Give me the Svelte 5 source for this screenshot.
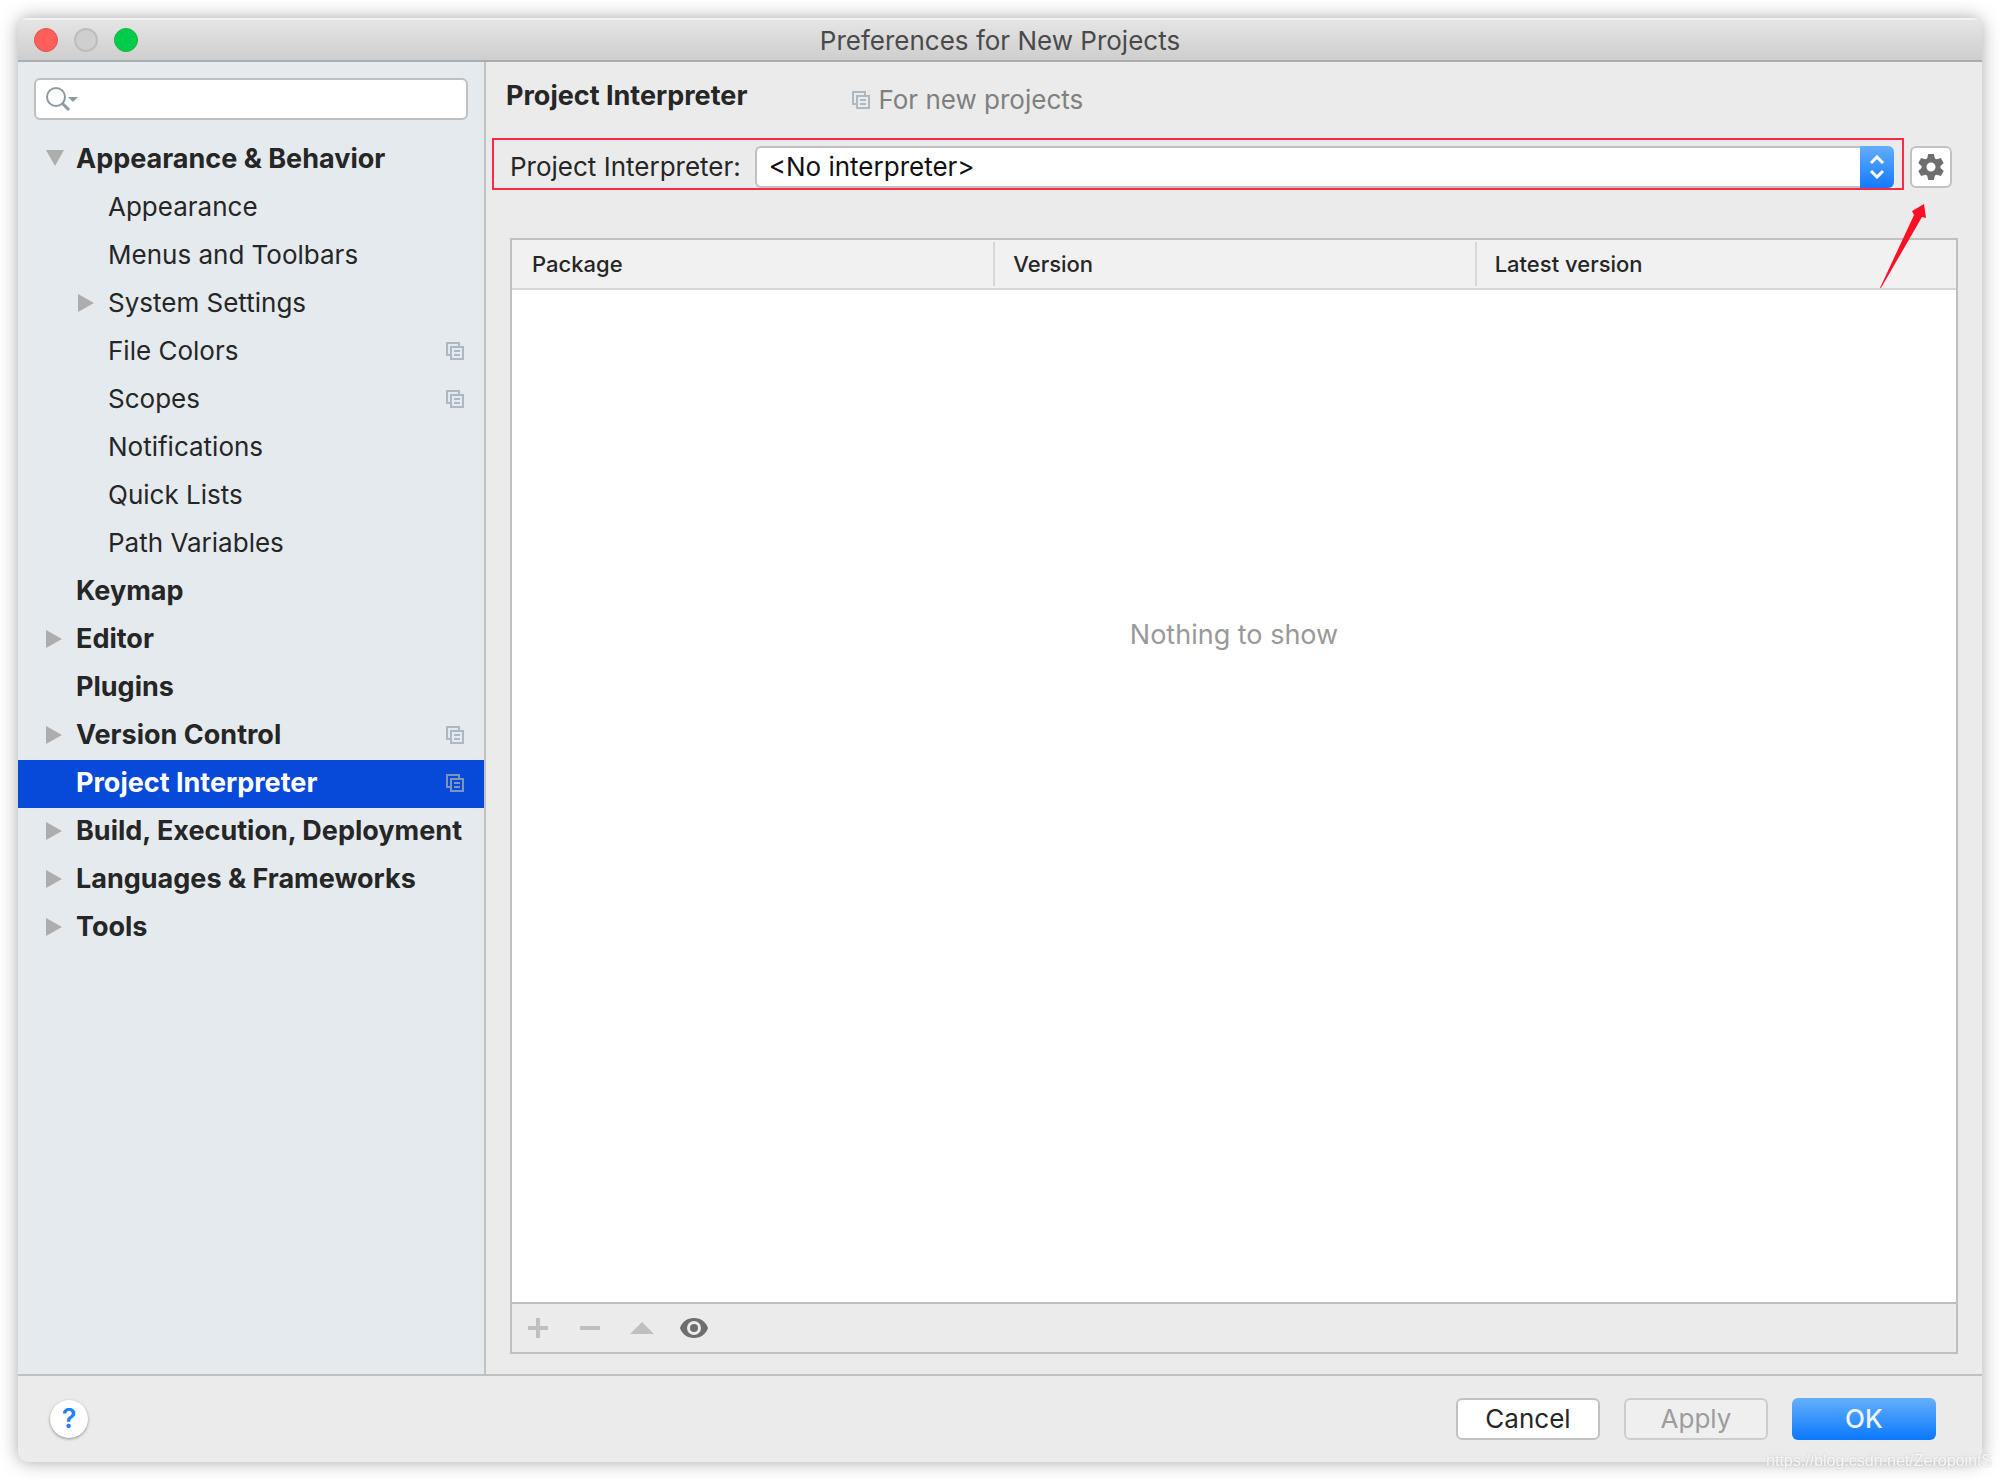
<script>
	let query = $state('')
	let interpreter = $state('none')

	const tree = [
		{ label: 'Appearance & Behavior', arrow: 'open' },
		{ label: 'Appearance', child: true },
		{ label: 'Menus and Toolbars', child: true },
		{ label: 'System Settings', child: true, arrow: 'closed' },
		{ label: 'File Colors', child: true, shared: true },
		{ label: 'Scopes', child: true, shared: true },
		{ label: 'Notifications', child: true },
		{ label: 'Quick Lists', child: true },
		{ label: 'Path Variables', child: true },
		{ label: 'Keymap' },
		{ label: 'Editor', arrow: 'closed' },
		{ label: 'Plugins' },
		{ label: 'Version Control', arrow: 'closed', shared: true },
		{ label: 'Project Interpreter', shared: true },
		{ label: 'Build, Execution, Deployment', arrow: 'closed' },
		{ label: 'Languages & Frameworks', arrow: 'closed' },
		{ label: 'Tools', arrow: 'closed' }
	]
	let selected = $state('Project Interpreter')

	const columns = ['Package', 'Version', 'Latest version']
</script>

{#snippet copyIcon()}
	<svg class="copy" width="18" height="18" viewBox="0 0 18 18" aria-hidden="true">
		<path d="M4 13H1V1h12v3M5 5h12v12H5zM8 9h6M8 13h6" />
	</svg>
{/snippet}

<div class="desktop">
	<div class="window">
		<header class="titlebar">
			<div class="lights">
				<button class="light close" aria-label="Close"></button>
				<button class="light minimize" aria-label="Minimize" disabled></button>
				<button class="light zoom" aria-label="Zoom"></button>
			</div>
			<h1>Preferences for New Projects</h1>
		</header>

		<div class="body">
			<nav class="sidebar">
				<label class="search">
					<svg width="34" height="26" viewBox="0 0 34 26" aria-hidden="true">
						<circle cx="10" cy="11" r="9" />
						<path d="M16 17l7 7" stroke-width="3" />
						<path class="caret" d="M22 11h10l-5 5z" />
					</svg>
					<input type="text" aria-label="Search settings" bind:value={query} />
				</label>
				<ul>
					{#each tree as item}
						<li>
							<button
								class="row"
								class:child={item.child}
								class:selected={item.label === selected}
								onclick={() => (selected = item.label)}>
								<span class="arrow">
									{#if item.arrow === 'open'}
										<svg width="18" height="18" viewBox="0 0 18 18"><path d="M0 0h18L9 16z" /></svg>
									{:else if item.arrow === 'closed'}
										<svg width="18" height="18" viewBox="0 0 18 18"><path d="M0 0v18l16-9z" /></svg>
									{/if}
								</span>
								<span class="label">{item.label}</span>
								{#if item.shared}{@render copyIcon()}{/if}
							</button>
						</li>
					{/each}
				</ul>
			</nav>

			<main>
				<div class="heading">
					<h2>Project Interpreter</h2>
					<p class="scope">{@render copyIcon()}For new projects</p>
				</div>

				<div class="picker">
					<div class="marked">
						<label for="interpreter">Project Interpreter:</label>
						<div class="combo">
							<select id="interpreter" bind:value={interpreter}>
								<option value="none">&lt;No interpreter&gt;</option>
							</select>
							<span class="stepper">
								<svg width="16" height="24" viewBox="0 0 16 24" aria-hidden="true">
									<path d="M2 8l6-6 6 6M2 16l6 6 6-6" />
								</svg>
							</span>
						</div>
					</div>
					<button class="gear" aria-label="Interpreter settings">
						<svg width="26" height="28" viewBox="-13 -14 26 28" aria-hidden="true">
							<circle r="7" />
							{#each [0, 60, 120, 180, 240, 300] as angle}
								<path d="M-4-8l1.200-5h5.600L4-8z" transform="rotate({angle})" />
							{/each}
						</svg>
					</button>
					<svg class="pointer" width="46" height="84" viewBox="0 0 46 84" aria-hidden="true">
						<path d="M0 84L34 11l-2-4L44 0l2 14-4-1L1 84z" />
					</svg>
				</div>

				<section class="packages">
					<table>
						<thead>
							<tr>
								{#each columns as column}
									<th scope="col"><span>{column}</span></th>
								{/each}
							</tr>
						</thead>
					</table>
					<p class="empty">Nothing to show</p>
					<div class="tools">
						<button aria-label="Install" disabled>
							<svg width="28" height="28" viewBox="0 0 28 28"><path d="M4 12h8V4h4v8h8v4h-8v8h-4v-8H4z" /></svg>
						</button>
						<button aria-label="Uninstall" disabled>
							<svg width="28" height="28" viewBox="0 0 28 28"><path d="M4 12h20v4H4z" /></svg>
						</button>
						<button aria-label="Upgrade" disabled>
							<svg width="28" height="28" viewBox="0 0 28 28"><path d="M2 20L14 8l12 12z" /></svg>
						</button>
						<button class="eye" aria-label="Show early releases">
							<svg width="28" height="28" viewBox="0 0 28 28">
								<path
									fill-rule="evenodd"
									d="M14 4C7 4 2 8 0 14c2 6 7 10 14 10s12-4 14-10C26 8 21 4 14 4zm0 3a7 7 0 1 1 0 14 7 7 0 0 1 0-14z" />
								<circle cx="14" cy="14" r="4" />
							</svg>
						</button>
					</div>
				</section>
			</main>
		</div>

		<footer>
			<button class="help" aria-label="Help">?</button>
			<div class="actions">
				<button class="action">Cancel</button>
				<button class="action" disabled>Apply</button>
				<button class="action primary">OK</button>
			</div>
		</footer>
	</div>
	<span class="watermark">https://blog.csdn.net/ZeropointS</span>
</div>

<style>
	:global(body) {
		margin: 0;
		background: #fff;
	}

	.desktop {
		position: relative;
		box-sizing: border-box;
		height: 100vh;
		padding: 18px;
		font-family: Inter, 'Liberation Sans', sans-serif;
		font-size: 26px;
		line-height: 32px;
		color: #262626;
	}

	.desktop * {
		box-sizing: border-box;
	}

	h1,
	h2,
	p,
	ul {
		margin: 0;
		padding: 0;
	}

	button,
	input,
	select {
		margin: 0;
		padding: 0;
		border: none;
		background: none;
		font: inherit;
		color: inherit;
	}

	.window {
		display: flex;
		flex-direction: column;
		height: 100%;
		overflow: hidden;
		border-radius: 10px;
		background: #ebebeb;
		box-shadow: 0 0 18px rgba(0, 0, 0, 0.35);
	}

	.titlebar {
		display: grid;
		grid-template-columns: 1fr auto 1fr;
		align-items: center;
		height: 44px;
		flex: none;
		padding: 0 16px;
		border-top: 2px solid #f3f3f3;
		border-bottom: 2px solid #acacac;
		background: linear-gradient(#e5e5e5, #cecece);
	}

	.titlebar h1 {
		padding-top: 2px;
		font-size: 26px;
		font-weight: 400;
		color: #4a4a4a;
	}

	.lights {
		display: flex;
		gap: 16px;
	}

	.light {
		width: 24px;
		height: 24px;
		border-radius: 50%;
	}

	.close {
		border: 1px solid #e8504c;
		background: #ff5f5b;
	}

	.minimize {
		border: 2px solid #bdbdbd;
		background: #cfcfcf;
	}

	.zoom {
		border: 1px solid #0fb83c;
		background: #00cc4b;
	}

	.body {
		display: flex;
		flex: 1;
		min-height: 0;
	}

	.sidebar {
		flex: none;
		width: 468px;
		padding-top: 16px;
		border-right: 2px solid #c2c2c2;
		background: #e5eaee;
	}

	.search {
		display: flex;
		align-items: center;
		height: 42px;
		margin: 0 16px 16px;
		padding-left: 10px;
		border: 2px solid #c0c0c0;
		border-radius: 6px;
		background: #fff;
	}

	.search svg {
		fill: none;
		stroke: #8c99a1;
		stroke-width: 2;
	}

	.search .caret {
		fill: #8c99a1;
		stroke: none;
	}

	.search input {
		flex: 1;
		min-width: 0;
		outline: none;
	}

	ul {
		list-style: none;
	}

	.row {
		display: flex;
		align-items: center;
		width: 100%;
		height: 48px;
		padding: 0 20px 2px 28px;
		font-size: 27px;
		font-weight: 700;
		text-align: left;
		white-space: nowrap;
	}

	.row.child {
		padding-left: 60px;
		font-size: 26px;
		font-weight: 400;
	}

	.row.selected {
		background: #0749d9;
		color: #fff;
	}

	.arrow {
		display: flex;
		flex: none;
		width: 30px;
		fill: #adadad;
	}

	.label {
		flex: 1;
	}

	.copy {
		flex: none;
		fill: none;
		stroke: #adb9c1;
		stroke-width: 2;
	}

	.selected .copy {
		stroke: #7c95bb;
	}

	main {
		display: flex;
		flex-direction: column;
		flex: 1;
		min-width: 0;
		padding: 16px 24px 20px;
	}

	.heading {
		display: flex;
		align-items: flex-start;
		gap: 105px;
		margin-left: -4px;
		padding-top: 2px;
	}

	.heading h2 {
		font-size: 27px;
		font-weight: 700;
	}

	.scope {
		display: flex;
		align-items: center;
		gap: 8px;
		padding-top: 4px;
		color: #808080;
	}

	.picker {
		position: relative;
		display: flex;
		align-items: flex-end;
		gap: 6px;
		margin: 22px 0 48px -18px;
		padding-right: 6px;
	}

	.marked {
		display: flex;
		align-items: flex-end;
		flex: 1;
		gap: 14px;
		height: 52px;
		padding: 0 8px 0 16px;
		border: 2px solid #fb2c42;
	}

	.marked label {
		line-height: 42px;
	}

	.combo {
		display: flex;
		flex: 1;
		height: 42px;
		border: 2px solid #c0c0c0;
		border-right: none;
		border-radius: 6px;
		background: #fff;
	}

	.combo select {
		flex: 1;
		padding-left: 12px;
		appearance: none;
		outline: none;
		color: #111;
	}

	.stepper {
		display: flex;
		align-items: center;
		justify-content: center;
		width: 34px;
		margin: -2px 0;
		border-radius: 0 6px 6px 0;
		background: linear-gradient(#63aefb, #1479fe);
	}

	.stepper svg {
		fill: none;
		stroke: #fff;
		stroke-width: 3;
	}

	.gear {
		display: flex;
		align-items: center;
		justify-content: center;
		width: 42px;
		height: 42px;
		margin-bottom: 2px;
		border: 2px solid #c2c2c2;
		border-radius: 6px;
		background: #fff;
	}

	.gear circle {
		fill: none;
		stroke: #6e6e6e;
		stroke-width: 5;
	}

	.gear path {
		fill: #6e6e6e;
	}

	.pointer {
		position: absolute;
		top: 66px;
		right: 32px;
		fill: #fd0f24;
	}

	.packages {
		display: flex;
		flex-direction: column;
		flex: 1;
		border: 2px solid #c0c0c0;
		background: #fff;
	}

	table {
		width: 100%;
		table-layout: fixed;
		border-spacing: 0;
		background: #f1f1f1;
	}

	th {
		height: 50px;
		padding: 0;
		border-bottom: 2px solid #d8d8d8;
		font-size: 22px;
		font-weight: 500;
		text-align: left;
	}

	th span {
		display: block;
		padding: 6px 0 6px 20px;
	}

	th + th span {
		padding-left: 18px;
		border-left: 2px solid #d8d8d8;
	}

	.empty {
		flex: 1;
		padding-top: 329px;
		font-size: 27px;
		color: #999;
		text-align: center;
	}

	.tools {
		display: flex;
		align-items: center;
		gap: 24px;
		height: 50px;
		padding-left: 12px;
		border-top: 2px solid #c0c0c0;
		background: #ebebeb;
	}

	.tools button {
		display: flex;
		fill: #bfbfbf;
	}

	.tools .eye {
		fill: #6e6e6e;
	}

	footer {
		display: flex;
		align-items: center;
		justify-content: space-between;
		flex: none;
		height: 88px;
		padding: 0 46px 0 32px;
		border-top: 2px solid #c0c0c0;
	}

	.help {
		width: 38px;
		height: 38px;
		border-radius: 50%;
		background: #fff;
		box-shadow: 0 1px 3px rgba(0, 0, 0, 0.4);
		font-size: 27px;
		font-weight: 600;
		color: #1e82fb;
	}

	.actions {
		display: flex;
		gap: 24px;
	}

	.action {
		width: 144px;
		height: 42px;
		border: 2px solid #c2c2c2;
		border-radius: 6px;
		background: #fff;
	}

	.action:disabled {
		border-color: #cdcdcd;
		background: #efefef;
		color: #9d9d9d;
	}

	.action.primary {
		border: none;
		background: linear-gradient(#65b0fb, #0a78ff);
		font-weight: 500;
		color: #eef5ff;
	}

	.watermark {
		position: absolute;
		right: 8px;
		bottom: 3px;
		font-family: 'Liberation Sans', sans-serif;
		font-size: 16px;
		color: #f8f8f8;
		text-shadow: 0 0 2px #bbb;
	}
</style>
